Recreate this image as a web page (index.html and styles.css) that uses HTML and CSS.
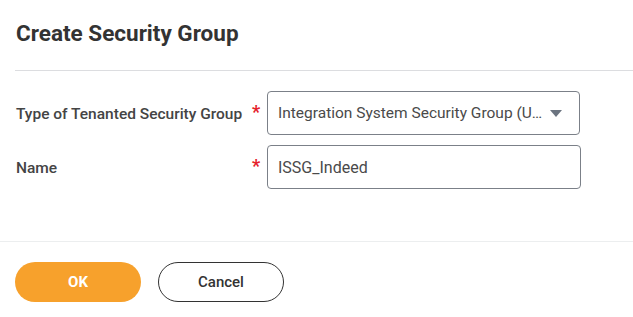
FILE: index.html
```
<!DOCTYPE html>
<html lang="en">
<head>
    <meta charset="UTF-8">
    <meta name="viewport" content="width=device-width, initial-scale=1.0">
    <title>Create Security Group</title>
    <link rel="stylesheet" href="styles.css">
</head>
<body>
    <div class="dialog">
        <div class="dialog-header">
            <h1>Create Security Group</h1>
        </div>
        <div class="dialog-body">
            <div class="form-row">
                <label class="form-label" for="groupType">Type of Tenanted Security Group</label>
                <span class="required">*</span>
                <div class="select-box" id="groupType">
                    <span class="select-text">Integration System Security Group (Unconstrained)</span>
                    <span class="select-arrow"></span>
                </div>
            </div>
            <div class="form-row">
                <label class="form-label" for="name">Name</label>
                <span class="required">*</span>
                <input class="text-input" type="text" id="name" value="ISSG_Indeed">
            </div>
        </div>
        <div class="dialog-footer">
            <button class="btn btn-primary">OK</button>
            <button class="btn btn-secondary">Cancel</button>
        </div>
    </div>
</body>
</html>
```

FILE: styles.css
```
body {
    font-family: Roboto, "Liberation Sans", Arial, sans-serif;
    background-color: #fff;
    margin: 0;
    color: #333;
}
.dialog-header {
    margin-left: 15px;
    padding: 20px 0 24px 1px;
    border-bottom: 1px solid #dcdde0;
}
.dialog-header h1 {
    margin: 0;
    font-size: 22.5px;
    line-height: 26px;
    font-weight: 700;
    color: #333;
}
.dialog-body {
    padding: 20px 0 52px 16px;
}
.form-row {
    display: flex;
    align-items: center;
    margin-bottom: 10px;
}
.form-row:last-child {
    margin-bottom: 0;
}
.form-label {
    width: 236px;
    font-size: 15.5px;
    font-weight: 500;
    color: #444;
    margin-top: 1px;
}
.required {
    width: 15px;
    color: #e5212b;
    font-size: 18px;
    line-height: 18px;
    font-weight: 700;
    margin-top: -2px;
}
.select-box,
.text-input {
    box-sizing: border-box;
    height: 44px;
    border: 1px solid #7b8088;
    border-radius: 4px;
    background: #fff;
    font-family: inherit;
    font-size: 15.5px;
    color: #4a4a4a;
}
.select-box {
    width: 313px;
    display: flex;
    align-items: center;
    padding: 0 17px 0 10px;
}
.select-text {
    flex: 1;
    white-space: nowrap;
    overflow: hidden;
    text-overflow: ellipsis;
}
.select-arrow {
    width: 0;
    height: 0;
    margin-left: 3px;
    border-left: 6px solid transparent;
    border-right: 6px solid transparent;
    border-top: 7px solid #6b7480;
}
.text-input {
    width: 314px;
    padding: 0 10px;
    outline: none;
    font-size: 16px;
}
.dialog-footer {
    border-top: 1px solid #eceeef;
    padding: 20px 15px;
    display: flex;
    gap: 17px;
}
.btn {
    width: 126px;
    height: 40px;
    border-radius: 20px;
    font-family: inherit;
    font-size: 15px;
    font-weight: 700;
    cursor: pointer;
}
.btn-primary {
    background-color: #f7a12c;
    border: none;
    color: #fff;
}
.btn-secondary {
    background-color: #fff;
    border: 1px solid #333;
    color: #333;
    font-weight: 500;
}
```
